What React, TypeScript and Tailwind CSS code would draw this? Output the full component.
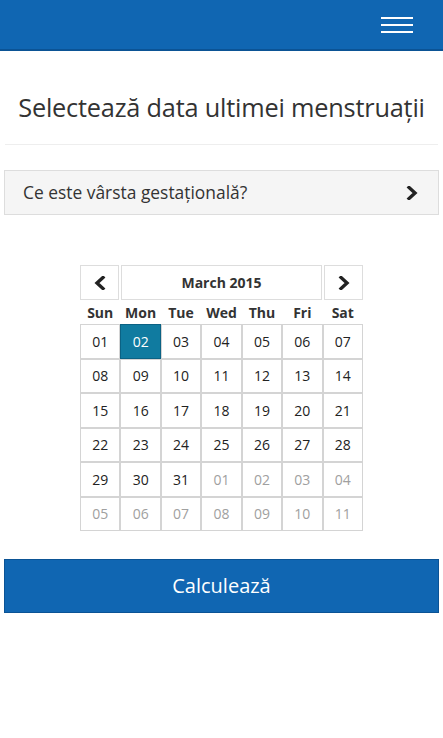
import React from 'react'

const days = ['Sun', 'Mon', 'Tue', 'Wed', 'Thu', 'Fri', 'Sat']

const cells: { d: string; muted?: boolean; active?: boolean }[] = [
  ...Array.from({ length: 31 }, (_, i) => ({
    d: String(i + 1).padStart(2, '0'),
    active: i === 1,
  })),
  ...Array.from({ length: 11 }, (_, i) => ({
    d: String(i + 1).padStart(2, '0'),
    muted: true,
  })),
]

const Chevron: React.FC<{ dir: 'left' | 'right' }> = ({ dir }) => (
  <svg width="12" height="14" viewBox="0 0 12 14">
    <path
      d={dir === 'right' ? 'M3 1.5 L9 7 L3 12.5' : 'M9 1.5 L3 7 L9 12.5'}
      fill="none"
      stroke="#222"
      strokeWidth="3.4"
      strokeLinecap="square"
      strokeLinejoin="miter"
    />
  </svg>
)

const App: React.FC = () => {
  return (
    <div className="min-h-[738px] bg-white font-['Open_Sans',sans-serif] text-[#333]">
      {/* top bar */}
      <div className="flex h-[51px] items-center justify-end border-b-2 border-[#0b5395] bg-[#1066b2] pr-[30px]">
        <div className="flex w-[32px] flex-col gap-[5px]">
          <span className="h-[2px] bg-white" />
          <span className="h-[2px] bg-white" />
          <span className="h-[2px] bg-white" />
        </div>
      </div>

      <div className="px-[4px]">
        <h1 className="pt-[38px] pb-[19px] text-center text-[25.3px] leading-[36px] tracking-[-0.2px] text-[#333]">
          Selectează data ultimei menstruații
        </h1>
        <div className="mx-[1px] h-px bg-[#eee]" />

        <div className="mt-[25px] flex h-[45px] items-center justify-between border border-[#ddd] bg-[#f5f5f5] pl-[18px] pr-[20px]">
          <span className="text-[17.4px] text-[#333]">Ce este vârsta gestațională?</span>
          <Chevron dir="right" />
        </div>

        {/* calendar */}
        <div className="mx-auto mt-[50px] w-[283px]">
          <div className="flex h-[35px] gap-[2px]">
            <div className="flex w-[39px] items-center justify-center border border-[#ddd]">
              <Chevron dir="left" />
            </div>
            <div className="flex flex-1 items-center justify-center border border-[#ddd] text-[14px] font-bold text-[#333]">
              March 2015
            </div>
            <div className="flex w-[39px] items-center justify-center border border-[#ddd]">
              <Chevron dir="right" />
            </div>
          </div>
          <div className="grid h-[24px] grid-cols-7 items-center text-center text-[14px] font-bold text-[#333]">
            {days.map((d) => (
              <span key={d}>{d}</span>
            ))}
          </div>
          <div className="grid grid-cols-7">
            {cells.map((c, i) => (
              <div
                key={i}
                className={
                  c.active
                    ? 'flex h-[34.5px] items-center justify-center border border-[#0b6284] bg-[#107ba0] text-[14px] text-white'
                    : c.muted
                      ? 'flex h-[34.5px] items-center justify-center border border-[#d4d4d4] text-[14px] text-[#a0a0a0]'
                      : 'flex h-[34.5px] items-center justify-center border border-[#d4d4d4] text-[14px] text-[#222]'
                }
              >
                {c.d}
              </div>
            ))}
          </div>
        </div>

        <button className="mt-[28px] flex h-[54px] w-full items-center justify-center border border-[#0b5395] bg-[#1066b2] text-[20px] text-white">
          Calculează
        </button>
      </div>
    </div>
  )
}

export default App
